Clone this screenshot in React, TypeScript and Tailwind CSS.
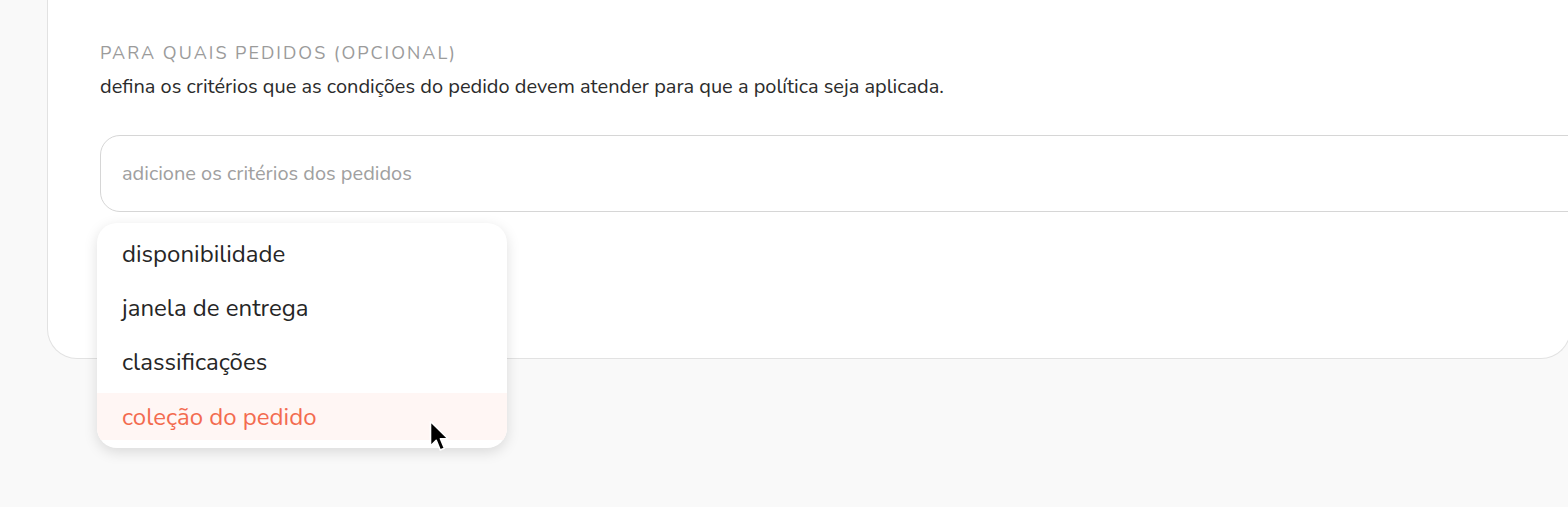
import React from 'react';

const options = ['disponibilidade', 'janela de entrega', 'classificações', 'coleção do pedido'];

function Cursor() {
  return (
    <svg width="22" height="36" viewBox="0 0 22 36" className="absolute left-[429px] top-[420px]">
      <path d="M1.5 1.5 L1.5 26 L7.2 20.3 L11.2 30 L15.4 28.2 L11.4 18.8 L19 18.8 Z" fill="#000" stroke="#fff" strokeWidth="1.6" strokeLinejoin="round" />
    </svg>
  );
}

export default function App() {
  const active = 3;
  return (
    <div className="relative h-[507px] w-full overflow-hidden bg-[#f9f9f9]" style={{ fontFamily: 'Nunito, Lato, "Noto Sans", sans-serif' }}>
      <div className="ml-[47px] h-[359px] w-[1524px] rounded-b-[30px] border border-t-0 border-[#e2e2e2] bg-white pl-[52px] pt-[41px]">
        <div className="text-[18px] leading-[24px] uppercase tracking-[2px] text-[#9b9b9b]">para quais pedidos (opcional)</div>
        <p className="mt-[8px] text-[20px] leading-[28px] text-[#2b2b2b]">
          defina os critérios que as condições do pedido devem atender para que a política seja aplicada.
        </p>
        <div className="mt-[34px] flex h-[77px] w-[1500px] items-center rounded-[20px] border border-[#d6d6d6] pl-[21px] text-[20px] text-[#a0a0a0]">
          adicione os critérios dos pedidos
        </div>
      </div>

      <ul className="absolute left-[97px] top-[223px] w-[410px] overflow-hidden rounded-[20px] bg-white pb-[8px] pt-[4px] shadow-[0_4px_14px_rgba(0,0,0,0.13)]">
        {options.map((o, i) => (
          <li
            key={o}
            className={
              i === active
                ? 'mt-[4px] flex h-[47px] items-center bg-[#fff6f4] pl-[25px] text-[24px] text-[#f36b4f]'
                : 'flex h-[54px] items-center pl-[25px] text-[24px] text-[#262626]'
            }
          >
            {o}
          </li>
        ))}
      </ul>
      <Cursor />
    </div>
  );
}
